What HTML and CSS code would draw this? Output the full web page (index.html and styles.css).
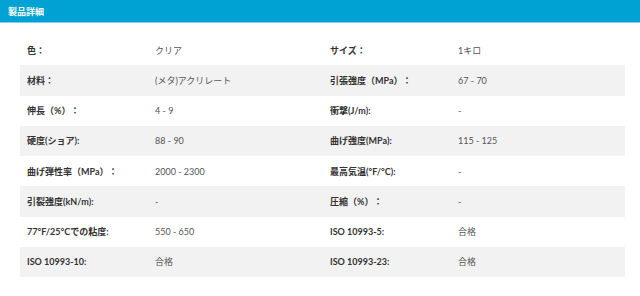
FILE: index.html
```html
<!DOCTYPE html>
<html lang="ja">
<head>
<meta charset="utf-8">
<link rel="stylesheet" href="styles.css">
</head>
<body>
<div class="header"><span class="title">製品詳細</span></div>
<table class="specs">
<colgroup><col class="c-l"><col class="c-v1"><col class="c-l"><col class="c-v2"></colgroup>
<tbody>
<tr><td class="lab">色：</td><td class="val">クリア</td><td class="lab">サイズ：</td><td class="val">1キロ</td></tr>
<tr><td class="lab">材料：</td><td class="val">(メタ)アクリレート</td><td class="lab">引張強度（MPa）：</td><td class="val">67 - 70</td></tr>
<tr><td class="lab">伸長（%）：</td><td class="val">4 - 9</td><td class="lab">衝撃(J/m):</td><td class="val">-</td></tr>
<tr><td class="lab">硬度(ショア):</td><td class="val">88 - 90</td><td class="lab">曲げ強度(MPa):</td><td class="val">115 - 125</td></tr>
<tr><td class="lab">曲げ弾性率（MPa）：</td><td class="val">2000 - 2300</td><td class="lab">最高気温(°F/°C):</td><td class="val">-</td></tr>
<tr><td class="lab">引裂強度(kN/m):</td><td class="val">-</td><td class="lab">圧縮（%）：</td><td class="val">-</td></tr>
<tr><td class="lab">77°F/25°Cでの粘度:</td><td class="val">550 - 650</td><td class="lab">ISO 10993-5:</td><td class="val">合格</td></tr>
<tr><td class="lab">ISO 10993-10:</td><td class="val">合格</td><td class="lab">ISO 10993-23:</td><td class="val">合格</td></tr>
</tbody>
</table>
</body>
</html>
```
FILE: styles.css
```css
html, body {
  margin: 0;
  padding: 0;
  background: #ffffff;
  font-family: "Lato", "Noto Sans CJK JP", sans-serif;
  text-spacing-trim: space-all;
}
.header {
  height: 22px;
  background: #00a2d3;
  border-bottom: 1px solid #7fd0ea;
  display: flex;
  align-items: center;
  padding-left: 8px;
}
.title {
  color: #ffffff;
  font-weight: 700;
  font-size: 9px;
  font-family: "Noto Sans CJK JP", sans-serif;
}
.specs {
  margin: 12px 0 0 20px;
  width: 605px;
  border-collapse: collapse;
  table-layout: fixed;
}
.c-l { width: 128px; }
.c-v1 { width: 175px; }
.c-v2 { width: 174px; }
.specs tr { height: 30.25px; }
.specs tr:nth-child(even) { background: #f2f2f2; }
.specs td {
  padding: 0 0 0 7px;
  font-size: 9px;
  vertical-align: middle;
  white-space: nowrap;
}
.lab { color: #333333; font-weight: 700; }
.val { color: #555555; font-weight: 400; font-size: 9.5px; }
```
